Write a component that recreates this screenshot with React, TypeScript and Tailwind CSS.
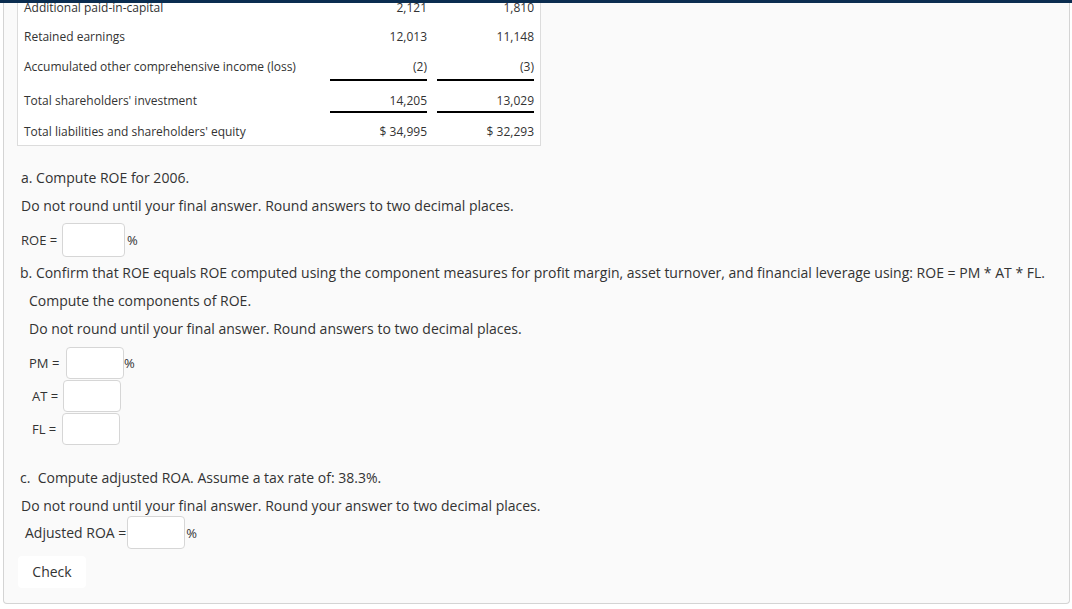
import React from 'react';

const rows = [
	{ label: 'Additional paid-in-capital', a: '2,121', b: '1,810', cls: 'pt-[13px]', line: false },
	{ label: 'Retained earnings', a: '12,013', b: '11,148', cls: 'pt-[13px]', line: false },
	{ label: 'Accumulated other comprehensive income (loss)', a: '(2)', b: '(3)', cls: 'pt-[14px] pb-[4px]', line: true },
	{ label: "Total shareholders' investment", a: '14,205', b: '13,029', cls: 'pt-[12px] pb-[2px]', line: true },
	{ label: "Total liabilities and shareholders' equity", a: '$ 34,995', b: '$ 32,293', cls: 'pt-[11px] pb-[5px]', line: false },
];

const Field = ({ w = 'w-[58px]', h = 'h-[32px]' }: { w?: string; h?: string }) => (
	<input
		type="text"
		className={`${w} ${h} shrink-0 rounded-[4px] border border-[#d6d6d6] bg-white px-1 text-[12px] outline-none`}
	/>
);

const App = () => {
	return (
		<div className="min-h-screen bg-white font-['Open_Sans',sans-serif] text-[#333]">
			<div className="h-[3px] bg-[#0b2d50]" />
			<div className="ml-[3px] h-[601px] w-[1067px] overflow-hidden rounded-b-[4px] border-x border-b border-[#d4d4d4] bg-[#fafafa]">
				{/* balance sheet, top rows scrolled away */}
				<div className="-mt-[17px] ml-[13px] w-[524px] border border-[#dcdcdc] bg-white text-[12px] leading-[16px]">
					{rows.map((r) => (
						<div key={r.label} className="flex">
							<div className={`flex-1 pl-[6px] ${r.cls} ${r.line ? 'border-b-2 border-transparent' : ''}`}>{r.label}</div>
							<div className={`w-[97px] text-right ${r.cls} ${r.line ? 'border-b-2 border-black' : ''}`}>{r.a}</div>
							<div className={`ml-[10px] mr-[6px] w-[97px] text-right ${r.cls} ${r.line ? 'border-b-2 border-black' : ''}`}>{r.b}</div>
						</div>
					))}
				</div>

				<div className="text-[14px] leading-[20px]">
					<p className="ml-[17px] mt-[22px]">a. Compute ROE for 2006.</p>
					<p className="ml-[17px] mt-[8px]">Do not round until your final answer. Round answers to two decimal places.</p>
					<div className="ml-[17px] mt-[7px] flex items-center text-[13px]">
						<span className="w-[41px] shrink-0">ROE =</span>
						<Field w="w-[63px]" h="h-[34px]" />
						<span className="ml-[2px]">%</span>
					</div>

					<p className="ml-[16px] mt-[6px]">
						b. Confirm that ROE equals ROE computed using the component measures for profit margin, asset turnover, and financial leverage using: ROE = PM * AT * FL.
					</p>
					<p className="ml-[25px] mt-[8px]">Compute the components of ROE.</p>
					<p className="ml-[25px] mt-[8px]">Do not round until your final answer. Round answers to two decimal places.</p>

					<div className="ml-[25px] mt-[8px] flex items-center text-[13px]">
						<span className="w-[37px] shrink-0">PM =</span>
						<Field />
						<span>%</span>
					</div>
					<div className="ml-[28px] mt-[1px] flex items-center text-[13px]">
						<span className="w-[31px] shrink-0">AT =</span>
						<Field />
					</div>
					<div className="ml-[28px] mt-[1px] flex items-center text-[13px]">
						<span className="w-[30px] shrink-0">FL =</span>
						<Field />
					</div>

					<p className="ml-[16px] mt-[23px]">c.&nbsp; Compute adjusted ROA. Assume a tax rate of: 38.3%.</p>
					<p className="ml-[17px] mt-[8px]">Do not round until your final answer. Round your answer to two decimal places.</p>
					<div className="ml-[21px] flex items-center">
						<span className="mr-[1px] whitespace-nowrap">Adjusted ROA =</span>
						<Field h="h-[33px]" />
						<span className="ml-[1px] text-[13px]">%</span>
					</div>

					<button
						type="button"
						className="ml-[14px] mt-[7px] flex h-[32px] w-[68px] items-center justify-center rounded-[4px] bg-white text-[14px] text-[#333]"
					>
						Check
					</button>
				</div>
			</div>
		</div>
	);
};

export default App;
